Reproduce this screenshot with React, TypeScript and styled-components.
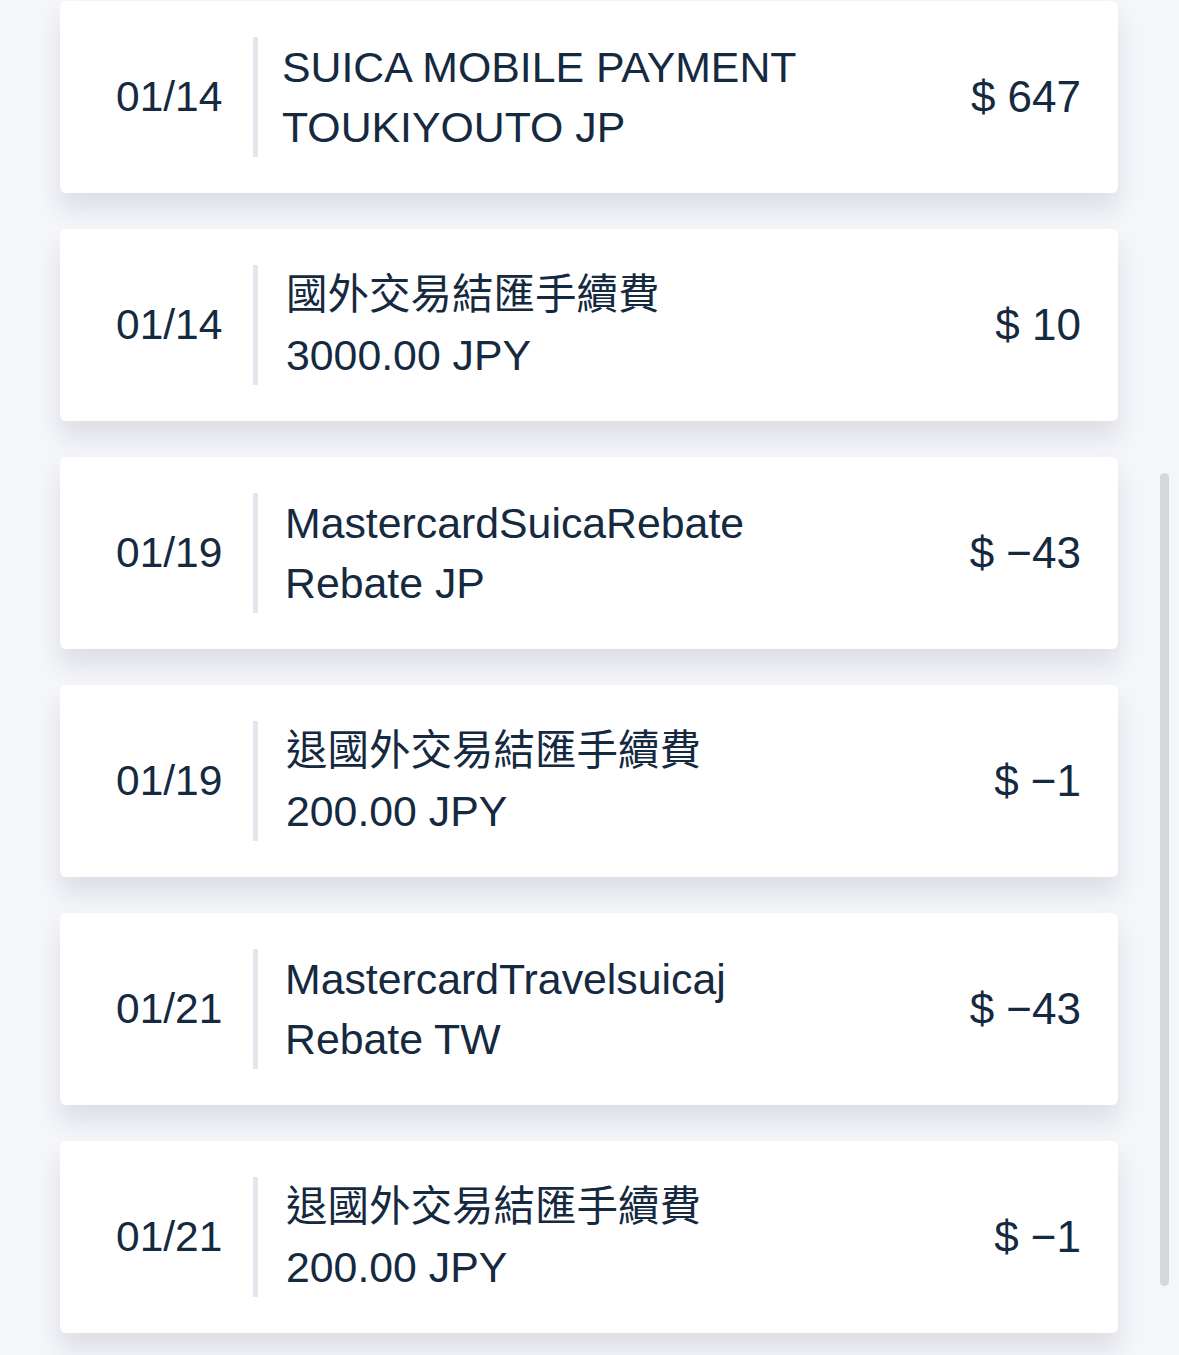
import React from "react";
import styled, { createGlobalStyle } from "styled-components";

const Global = createGlobalStyle`
  html, body { margin: 0; padding: 0; background: #f5f6fa; }
  body { font-family: "Liberation Sans", "Noto Sans CJK TC", sans-serif; }
`;

const Page = styled.div`
  position: relative;
  width: 1179px;
  height: 1355px;
  overflow: hidden;
  background: #f5f6fa;
`;

const List = styled.div`
  display: flex;
  flex-direction: column;
  gap: 36px;
  padding: 1px 61px 0 60px;
`;

const Card = styled.div`
  display: flex;
  align-items: center;
  height: 192px;
  background: #ffffff;
  border-radius: 6px;
  box-shadow: 0 16px 24px rgba(30, 40, 60, 0.11);
  padding: 0 37px 0 56px;
  box-sizing: border-box;
  color: #15293f;
`;

const DateText = styled.div`
  width: 104px;
  font-size: 42.5px;
  line-height: 60px;
`;

const Divider = styled.div`
  width: 5px;
  height: 120px;
  margin: 0 24px 0 33px;
  background: #e3e6ec;
`;

const Desc = styled.div`
  flex: 1;
  display: flex;
  flex-direction: column;
  line-height: 60px;
`;

const Line = styled.span<{ $cjk?: boolean; $indent: number }>`
  font-size: ${(p) => (p.$cjk ? "41.5px" : "42.8px")};
  padding-left: ${(p) => p.$indent}px;
  white-space: nowrap;
`;

const Amount = styled.div`
  font-size: 44px;
  line-height: 60px;
  white-space: pre;
`;

const Scrollbar = styled.div`
  position: absolute;
  left: 1160px;
  top: 473px;
  width: 9px;
  height: 813px;
  border-radius: 5px;
  background: #d6d7db;
`;

type Row = { date: string; l1: string; l2: string; amt: string; cjk: boolean; indent: number };

const rows: Row[] = [
  { date: "01/14", l1: "SUICA MOBILE PAYMENT", l2: "TOUKIYOUTO JP", amt: "$ 647", cjk: false, indent: 0 },
  { date: "01/14", l1: "國外交易結匯手續費", l2: "3000.00 JPY", amt: "$ 10", cjk: true, indent: 4 },
  { date: "01/19", l1: "MastercardSuicaRebate", l2: "Rebate JP", amt: "$ −43", cjk: false, indent: 3 },
  { date: "01/19", l1: "退國外交易結匯手續費", l2: "200.00 JPY", amt: "$ −1", cjk: true, indent: 4 },
  { date: "01/21", l1: "MastercardTravelsuicaj", l2: "Rebate TW", amt: "$ −43", cjk: false, indent: 3 },
  { date: "01/21", l1: "退國外交易結匯手續費", l2: "200.00 JPY", amt: "$ −1", cjk: true, indent: 4 },
];

export default function App() {
  return (
    <Page>
      <Global />
      <List>
        {rows.map((r, i) => (
          <Card key={i}>
            <DateText>{r.date}</DateText>
            <Divider />
            <Desc>
              <Line $cjk={r.cjk} $indent={r.indent}>{r.l1}</Line>
              <Line $indent={r.indent}>{r.l2}</Line>
            </Desc>
            <Amount>{r.amt}</Amount>
          </Card>
        ))}
      </List>
      <Scrollbar />
    </Page>
  );
}
